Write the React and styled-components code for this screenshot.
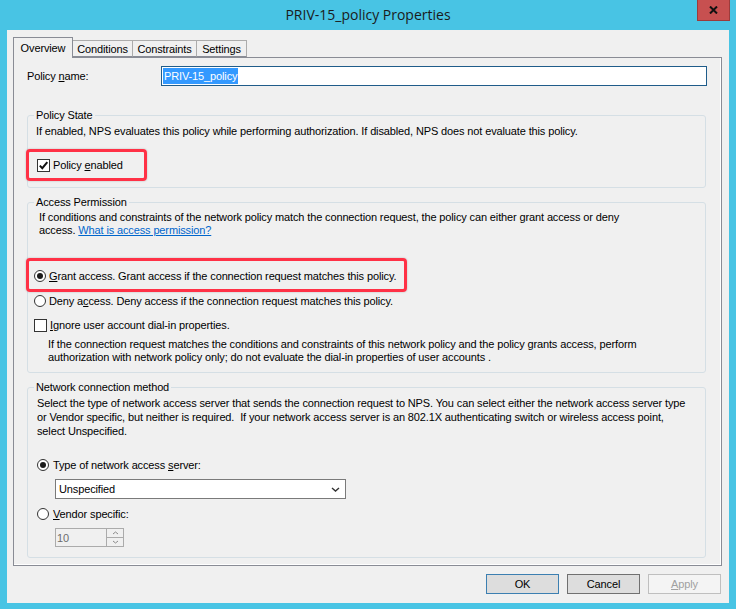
import React from 'react';
import styled, { createGlobalStyle } from 'styled-components';

const GlobalStyle = createGlobalStyle`
  html, body { margin: 0; padding: 0; }
  body {
    background: #48C4E4;
    font-family: "Liberation Sans", Arial, sans-serif;
    font-size: 11px;
    letter-spacing: -0.13px;
    color: #000;
  }
`;

const Window = styled.div`
  width: 736px;
  height: 609px;
  background: #48C4E4;
  display: flex;
  flex-direction: column;
  overflow: hidden;
`;

const TitleBar = styled.div`
  height: 30px;
  flex-shrink: 0;
  display: grid;
  grid-template-columns: 1fr auto 1fr;
`;

const Title = styled.div`
  grid-column: 2;
  align-self: center;
  margin-top: -2px;
  font-family: "Open Sans", "Noto Sans", sans-serif;
  font-size: 14px;
  letter-spacing: 0;
  color: #1b1b1b;
  white-space: nowrap;
`;

const CloseButton = styled.div`
  grid-column: 3;
  justify-self: end;
  align-self: start;
  width: 33px;
  height: 21px;
  margin-right: 6px;
  box-sizing: border-box;
  background: #C75050;
  border: 1px solid #9C3B3B;
  border-top: none;
  display: flex;
  align-items: center;
  justify-content: center;
`;

const Client = styled.div`
  flex: 1;
  margin: 0 7px 6px;
  background: #F0F0F0;
  padding: 7px 7px 0 6px;
  display: flex;
  flex-direction: column;
`;

const TabStrip = styled.div`
  height: 20px;
  display: flex;
  align-items: flex-end;
  position: relative;
  z-index: 1;
`;

const Tab = styled.div`
  width: ${p => p.$w}px;
  height: ${p => (p.$active ? 21 : 17)}px;
  margin-bottom: ${p => (p.$active ? -1 : 0)}px;
  margin-left: ${p => (p.$first ? 0 : -1)}px;
  box-sizing: border-box;
  border: 1px solid ${p => (p.$active ? '#898C95' : '#ACACAC')};
  border-bottom: ${p => (p.$active ? 'none' : '1px solid #898C95')};
  background: #F0F0F0;
  position: relative;
  z-index: ${p => (p.$active ? 2 : 0)};
  display: flex;
  align-items: center;
  justify-content: center;
  white-space: nowrap;
`;

const Panel = styled.div`
  height: 509px;
  box-sizing: border-box;
  border: 1px solid #898C95;
  box-shadow: inset -1px -1px 0 #FFFFFF;
  background: #F0F0F0;
  padding: 8px 15px 0 13px;
  display: flex;
  flex-direction: column;
`;

const NameRow = styled.div`
  height: 20px;
  display: flex;
  align-items: center;
`;

const NameLabel = styled.div`
  width: 134px;
  flex-shrink: 0;
`;

const TextInput = styled.div`
  flex: 1;
  height: 20px;
  margin-right: -1px;
  box-sizing: border-box;
  border: 1px solid #1F5C8A;
  background: #fff;
  padding: 1px 1px;
  display: flex;
  align-items: center;
`;

const Selected = styled.span`
  background: #3399FF;
  color: #fff;
  line-height: 16px;
  padding: 0 1px;
`;

const Group = styled.fieldset`
  margin: ${p => p.$mt}px 0 0;
  padding: ${p => p.$pt}px 0 ${p => p.$pb}px 8px;
  border: 1px solid #D5DFE5;
  border-radius: 3px;
  min-width: 0;
  display: flex;
  flex-direction: column;
  align-items: flex-start;
`;

const Legend = styled.legend`
  padding: 0 2px;
  margin-left: -2px;
  line-height: 13px;
  color: #000;
`;

const Text = styled.div`
  line-height: ${p => p.$lh || 13}px;
  white-space: pre;
  margin-left: ${p => p.$ml || 0}px;
  margin-top: ${p => p.$mt || 0}px;
`;

const Link = styled.span`
  color: #0066CC;
  text-decoration: underline;
`;

const U = styled.span`
  text-decoration: underline;
`;

const Highlight = styled.div`
  width: ${p => p.$w}px;
  box-sizing: border-box;
  margin-left: -10px;
  margin-top: ${p => p.$mt}px;
  padding: ${p => p.$pt}px 0 ${p => p.$pb}px ${p => p.$pl}px;
  border: 3px solid #FF3146;
  border-radius: 4px;
  box-shadow: 0 0 2px rgba(0, 0, 0, 0.25);
`;

const OptionRow = styled.div`
  height: 14px;
  display: flex;
  align-items: center;
  gap: ${p => p.$gap || 3}px;
  margin-left: ${p => p.$ml || 0}px;
  margin-top: ${p => p.$mt || 0}px;
  white-space: nowrap;
`;

const RadioMark = styled.span`
  width: 12px;
  height: 12px;
  flex-shrink: 0;
  box-sizing: border-box;
  border-radius: 50%;
  border: 1px solid #333;
  background: #fff;
  display: flex;
  align-items: center;
  justify-content: center;
  &::after {
    content: '';
    width: 6px;
    height: 6px;
    border-radius: 50%;
    background: ${p => (p.$checked ? '#1A1A1A' : 'transparent')};
  }
`;

const CheckMark = styled.span`
  width: 13px;
  height: 13px;
  flex-shrink: 0;
  box-sizing: border-box;
  border: 1px solid #333;
  background: #fff;
  display: flex;
  align-items: center;
  justify-content: center;
`;

const SelectBox = styled.div`
  width: 291px;
  height: 20px;
  box-sizing: border-box;
  margin-left: 19px;
  margin-top: 7px;
  border: 1px solid #7A7A7A;
  background: #fff;
  padding: 0 5px 0 3px;
  display: flex;
  align-items: center;
  justify-content: space-between;
`;

const Spinner = styled.div`
  width: 69px;
  height: 19px;
  box-sizing: border-box;
  margin-left: 19px;
  margin-top: 7px;
  border: 1px solid #ABABAB;
  background: #F0F0F0;
  display: flex;
`;

const SpinValue = styled.div`
  flex: 1;
  padding-left: 1px;
  color: #6D6D6D;
  display: flex;
  align-items: center;
`;

const SpinButtons = styled.div`
  width: 16px;
  border-left: 1px solid #ABABAB;
  display: flex;
  flex-direction: column;
`;

const SpinButton = styled.div`
  flex: 1;
  display: flex;
  align-items: center;
  justify-content: center;
  border-top: ${p => (p.$down ? '1px solid #ABABAB' : 'none')};
`;

const ButtonRow = styled.div`
  margin-top: 8px;
  padding-right: 1px;
  display: flex;
  justify-content: flex-end;
  gap: 8px;
`;

const Button = styled.div`
  width: 73px;
  height: 20px;
  box-sizing: border-box;
  border: 1px solid ${p => (p.$variant === 'default' ? '#3C7FB1' : p.$variant === 'disabled' ? '#BFBFBF' : '#707070')};
  background: ${p => (p.$variant === 'disabled' ? '#F4F4F4' : '#DDDDDD')};
  color: ${p => (p.$variant === 'disabled' ? '#A0A0A0' : '#000')};
  display: flex;
  align-items: center;
  justify-content: center;
`;

const Radio = ({ checked, children, ...rest }) => (
  <OptionRow {...rest}>
    <RadioMark $checked={checked} />
    <span>{children}</span>
  </OptionRow>
);

const Checkbox = ({ checked, children, ...rest }) => (
  <OptionRow {...rest}>
    <CheckMark>
      {checked && (
        <svg width="11" height="11" viewBox="0 0 11 11">
          <path d="M1.8 5.6 L4.3 8.2 L9.3 2.2" fill="none" stroke="#111" strokeWidth="2" />
        </svg>
      )}
    </CheckMark>
    <span>{children}</span>
  </OptionRow>
);

const Chevron = ({ up, color = '#333', w = 9, h = 5, sw = 1.4 }) => (
  <svg width={w} height={h} viewBox={`0 0 ${w} ${h}`}>
    <path
      d={up ? `M1 ${h - 1} L${w / 2} 1 L${w - 1} ${h - 1}` : `M1 1 L${w / 2} ${h - 1} L${w - 1} 1`}
      fill="none"
      stroke={color}
      strokeWidth={sw}
    />
  </svg>
);

const tabs = [
  { label: 'Overview', w: 60, active: true },
  { label: 'Conditions', w: 61 },
  { label: 'Constraints', w: 65 },
  { label: 'Settings', w: 51 },
];

export default function App() {
  return (
    <>
      <GlobalStyle />
      <Window>
        <TitleBar>
          <Title>PRIV-15_policy Properties</Title>
          <CloseButton>
            <svg width="9" height="8" viewBox="0 0 9 8">
              <path d="M1 0.5 L8 7.5 M8 0.5 L1 7.5" stroke="#111" strokeWidth="2" />
            </svg>
          </CloseButton>
        </TitleBar>
        <Client>
          <TabStrip>
            {tabs.map((t, i) => (
              <Tab key={t.label} $w={t.w} $active={t.active} $first={i === 0}>
                {t.label}
              </Tab>
            ))}
          </TabStrip>
          <Panel>
            <NameRow>
              <NameLabel>
                Policy <U>n</U>ame:
              </NameLabel>
              <TextInput>
                <Selected>PRIV-15_policy</Selected>
              </TextInput>
            </NameRow>

            <Group $mt={23} $pt={3} $pb={6}>
              <Legend>Policy State</Legend>
              <Text>
                If enabled, NPS evaluates this policy while performing authorization. If disabled, NPS does not evaluate this policy.
              </Text>
              <Highlight $w={121} $mt={11} $pt={6} $pb={6} $pl={8}>
                <Checkbox checked>
                  Policy <U>e</U>nabled
                </Checkbox>
              </Highlight>
            </Group>

            <Group $mt={8} $pt={2} $pb={8}>
              <Legend>Access Permission</Legend>
              <Text $ml={3}>
                If conditions and constraints of the network policy match the connection request, the policy can either grant access or deny
              </Text>
              <Text $ml={3}>
                access. <Link>What is access permission?</Link>
              </Text>
              <Highlight $w={381} $mt={21} $pt={8} $pb={6} $pl={5}>
                <Radio checked>
                  <U>G</U>rant access. Grant access if the connection request matches this policy.
                </Radio>
              </Highlight>
              <Radio $ml={-2} $mt={2}>
                Deny a<U>c</U>cess. Deny access if the connection request matches this policy.
              </Radio>
              <Checkbox $ml={-2} $mt={10}>
                <U>I</U>gnore user account dial-in properties.
              </Checkbox>
              <Text $ml={12} $mt={6}>
                If the connection request matches the conditions and constraints of this network policy and the policy grants access, perform
              </Text>
              <Text $ml={12}>
                authorization with network policy only; do not evaluate the dial-in properties of user accounts .
              </Text>
            </Group>

            <Group $mt={8} $pt={2} $pb={10}>
              <Legend>Network connection method</Legend>
              <Text $ml={1} $lh={14}>
                Select the type of network access server that sends the connection request to NPS. You can select either the network access server type
              </Text>
              <Text $ml={1} $lh={14}>
                {'or Vendor specific, but neither is required.  If your network access server is an 802.1X authenticating switch or wireless access point,'}
              </Text>
              <Text $ml={1} $lh={14}>
                select Unspecified.
              </Text>
              <Radio checked $ml={1} $mt={20} $gap={4}>
                Type of network access <U>s</U>erver:
              </Radio>
              <SelectBox>
                <span>Unspecified</span>
                <Chevron />
              </SelectBox>
              <Radio $ml={1} $mt={8} $gap={4}>
                <U>V</U>endor specific:
              </Radio>
              <Spinner>
                <SpinValue>10</SpinValue>
                <SpinButtons>
                  <SpinButton>
                    <Chevron up color="#8A8A8A" w={7} h={4} sw={1} />
                  </SpinButton>
                  <SpinButton $down>
                    <Chevron color="#8A8A8A" w={7} h={4} sw={1} />
                  </SpinButton>
                </SpinButtons>
              </Spinner>
            </Group>
          </Panel>
          <ButtonRow>
            <Button $variant="default">OK</Button>
            <Button>Cancel</Button>
            <Button $variant="disabled">
              <U>A</U>pply
            </Button>
          </ButtonRow>
        </Client>
      </Window>
    </>
  );
}
